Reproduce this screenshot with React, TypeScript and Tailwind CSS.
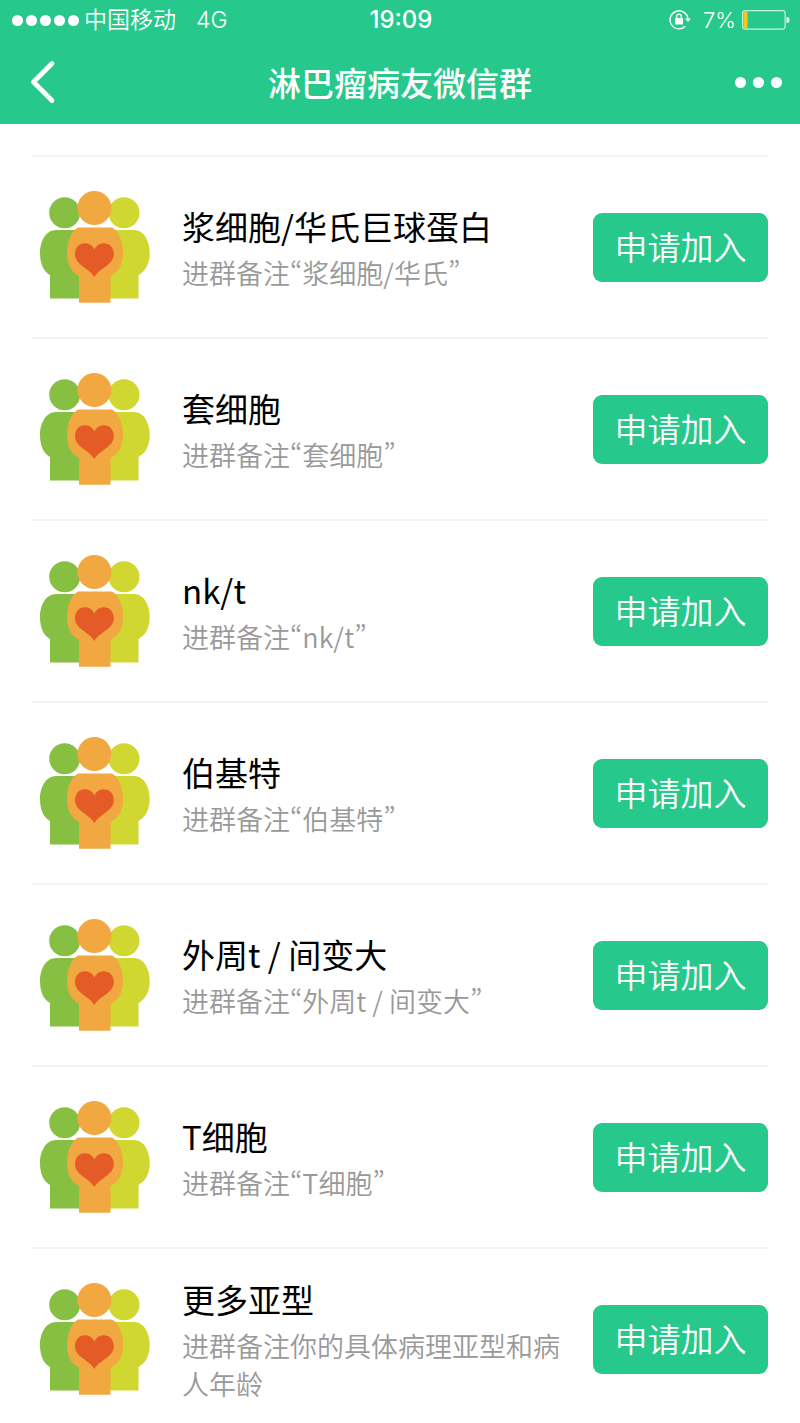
const groups = [
	{ title: "浆细胞/华氏巨球蛋白", note: "进群备注“浆细胞/华氏”" },
	{ title: "套细胞", note: "进群备注“套细胞”" },
	{ title: "nk/t", note: "进群备注“nk/t”" },
	{ title: "伯基特", note: "进群备注“伯基特”" },
	{ title: "外周t / 间变大", note: "进群备注“外周t / 间变大”" },
	{ title: "T细胞", note: "进群备注“T细胞”" },
	{ title: "更多亚型", note: "进群备注你的具体病理亚型和病人年龄" },
];

function GroupIcon() {
	return (
		<svg viewBox="0 0 126 126" className="size-[126px] shrink-0" aria-hidden="true">
			<g fill="#87bf42">
				<circle cx="32.7" cy="28.7" r="15.5" />
				<path d="M24 46H52V114.5H18V91C11 87 8 79 8 69C8 57 14 46 24 46Z" />
			</g>
			<g fill="#cfd730">
				<circle cx="92" cy="28.7" r="15.5" />
				<path d="M72 46H102C112 46 117.7 57 117.7 69C117.7 79 114 87 106.5 91V114.5H72Z" />
			</g>
			<g fill="#f2a841">
				<circle cx="62.4" cy="24" r="17" />
				<path d="M46 43.5H80C87 47 91 58 91 69C91 80 87 88 78.5 92V118.7H47V92C39 88 35 80 35 69C35 58 39 47 46 43.5Z" />
			</g>
			<path
				fill="#e55b27"
				d="M62.4 65.5C60.5 61.5 57 59.3 53 59.3C47 59.3 43 64 43 70C43 81 56 83 62.4 93C68.8 83 81.8 81 81.8 70C81.8 64 77.8 59.3 71.8 59.3C67.8 59.3 64.3 61.5 62.4 65.5Z"
			/>
		</svg>
	);
}

function RotationLockIcon() {
	return (
		<svg viewBox="0 0 22 22" className="size-[22px]" fill="none" stroke="currentColor" aria-hidden="true">
			<path d="M16.3 17.3A9 9 0 1 1 19 10" strokeWidth="1.4" />
			<path d="M16 9.5H22L19 13Z" fill="currentColor" stroke="none" />
			<rect x="6" y="9" width="8" height="6.5" rx="0.5" fill="currentColor" stroke="none" />
			<path d="M7.7 9.5V7.5A2.3 2.3 0 0 1 12.3 7.5V9.5" strokeWidth="1.3" />
		</svg>
	);
}

function Battery() {
	return (
		<svg viewBox="0 0 48 20" className="h-5 w-12" aria-hidden="true">
			<rect x="0.6" y="0.6" width="42.5" height="18.5" rx="2.5" fill="none" stroke="#c4f2de" strokeWidth="1.2" />
			<rect x="1.5" y="1.5" width="4" height="17" rx="1" fill="#f0cb1c" />
			<path d="M44.5 7A3 3 0 0 1 44.5 13Z" fill="#fff" />
		</svg>
	);
}

function StatusBar() {
	return (
		<div className="grid h-10 grid-cols-[1fr_auto_1fr] items-center pr-[10px] pl-3 font-['Inter','Noto_Sans_CJK_SC',sans-serif] text-[23px] leading-10">
			<div className="flex items-center gap-1 whitespace-nowrap">
				<span className="flex gap-[3px]">
					{[1, 2, 3, 4, 5].map((dot) => (
						<span key={dot} className="size-[11px] rounded-full bg-white" />
					))}
				</span>
				<span className="pl-px font-[350]">中国移动</span>
				<span className="ml-4 font-[350]">4G</span>
			</div>
			<span className="text-center text-[24px] font-medium">19:09</span>
			<div className="flex items-center justify-end">
				<RotationLockIcon />
				<span className="mr-[6px] ml-3 text-[22px] font-[350]">7%</span>
				<Battery />
			</div>
		</div>
	);
}

export default function App() {
	return (
		<div
			lang="zh-CN"
			className="min-h-screen bg-white font-['Noto_Sans_CJK_SC',sans-serif] text-black"
		>
			<header className="bg-[#26c88b] text-white">
				<StatusBar />
				<div className="grid h-[84px] grid-cols-[1fr_auto_1fr] items-center">
					<button aria-label="返回" className="justify-self-start pl-3">
						<svg viewBox="0 0 60 60" className="size-[60px]" fill="none" aria-hidden="true">
							<path d="M40 11.5L21.5 30L40 48.5" stroke="currentColor" strokeWidth="4.8" strokeLinecap="round" strokeLinejoin="round" />
						</svg>
					</button>
					<h1 className="text-[33px] leading-[48px] font-medium">淋巴瘤病友微信群</h1>
					<button aria-label="更多" className="flex gap-[7px] justify-self-end pr-[18px]">
						<span className="size-[11px] rounded-full bg-white" />
						<span className="size-[11px] rounded-full bg-white" />
						<span className="size-[11px] rounded-full bg-white" />
					</button>
				</div>
			</header>

			<main className="px-8 pt-[31px]">
				<ul>
					{groups.map((group) => (
						<li
							key={group.title}
							className="flex min-h-[182px] items-center border-t-2 border-[#f3f3f3]"
						>
							<GroupIcon />
							<div className="mr-8 ml-6 min-w-0 flex-1">
								<h2 className="mb-1 text-[33px] leading-[48px]">{group.title}</h2>
								<p className="text-[27px] leading-[38px] font-[350] text-[#999] [font-variant-east-asian:proportional-width]">
									{group.note}
								</p>
							</div>
							<button className="h-[69px] w-[175px] shrink-0 rounded-[9px] bg-[#26c88b] text-[33px] font-[350] text-white">
								申请加入
							</button>
						</li>
					))}
				</ul>
			</main>
		</div>
	);
}
